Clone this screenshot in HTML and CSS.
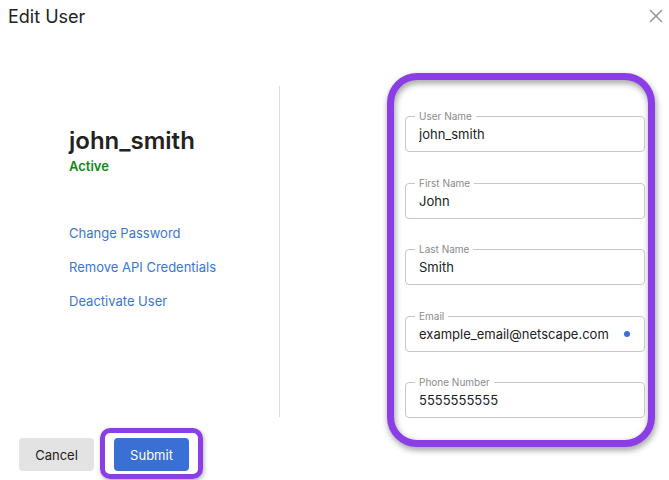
FILE: index.html
```html
<!DOCTYPE html>
<html lang="en">
<head>
    <meta charset="UTF-8">
    <meta name="viewport" content="width=device-width, initial-scale=1.0">
    <title>Edit User</title>
    <link rel="stylesheet" href="styles.css">
</head>
<body>
    <div class="dialog">
        <div class="header">
            <h1>Edit User</h1>
            <button class="close" type="button" aria-label="Close">
                <svg width="14" height="14" viewBox="0 0 14 14">
                    <path d="M1 1 L13 13 M13 1 L1 13" stroke="#9a9a9a" stroke-width="1.6" fill="none"/>
                </svg>
            </button>
        </div>

        <div class="main">
            <div class="left">
                <div class="profile">
                    <h2>john_smith</h2>
                    <div class="status">Active</div>
                    <ul class="actions">
                        <li><a href="#">Change Password</a></li>
                        <li><a href="#">Remove API Credentials</a></li>
                        <li><a href="#">Deactivate User</a></li>
                    </ul>
                </div>
                <div class="footer">
                    <button class="btn btn-cancel" type="button">Cancel</button>
                    <div class="submit-ring">
                        <button class="btn btn-submit" type="button">Submit</button>
                    </div>
                </div>
            </div>

            <div class="divider"></div>

            <div class="right">
                <div class="form-ring">
                    <div class="field">
                        <label>User Name</label>
                        <input type="text" value="john_smith">
                    </div>
                    <div class="field">
                        <label>First Name</label>
                        <input type="text" value="John">
                    </div>
                    <div class="field">
                        <label>Last Name</label>
                        <input type="text" value="Smith">
                    </div>
                    <div class="field">
                        <label>Email</label>
                        <input type="email" value="example_email@netscape.com">
                        <span class="dot"></span>
                    </div>
                    <div class="field">
                        <label>Phone Number</label>
                        <input type="tel" value="5555555555">
                    </div>
                </div>
            </div>
        </div>
    </div>
</body>
</html>
```

FILE: styles.css
```css
body {
    font-family: Inter, "Noto Sans", Arial, sans-serif;
    margin: 0;
    background-color: #fff;
    color: #222;
}

.dialog {
    width: 669px;
    height: 480px;
    overflow: hidden;
}

.header {
    height: 34px;
    display: flex;
    justify-content: space-between;
    align-items: flex-start;
    padding: 0 6px 0 8px;
}

.header h1 {
    margin: 6px 0 0;
    font-size: 18px;
    line-height: 22px;
    font-weight: 400;
    color: #222;
}

.close {
    background: none;
    border: none;
    padding: 0;
    margin-top: 9px;
    cursor: pointer;
}

.main {
    display: flex;
    align-items: flex-start;
    height: 446px;
}

.left {
    width: 279px;
    height: 446px;
    display: flex;
    flex-direction: column;
    justify-content: space-between;
}

.profile {
    padding: 92px 0 0 69px;
}

.profile h2 {
    margin: 0;
    font-size: 24px;
    line-height: 29px;
    font-weight: 600;
    color: #222;
}

.status {
    margin-top: 3px;
    font-size: 13px;
    line-height: 16px;
    font-weight: 600;
    color: #128a12;
}

.actions {
    list-style: none;
    margin: 51px 0 0;
    padding: 0;
}

.actions li {
    height: 34px;
    font-size: 13px;
    line-height: 16px;
}

.actions a {
    color: #3a76d6;
    text-decoration: none;
}

.footer {
    display: flex;
    align-items: flex-start;
    gap: 6px;
    padding: 0 0 1px 19px;
}

.btn {
    font-family: inherit;
    font-size: 13px;
    width: 75px;
    height: 33px;
    border: none;
    border-radius: 4px;
    cursor: pointer;
}

.btn-cancel {
    margin-top: 10px;
    background-color: #e3e3e3;
    color: #222;
}

.btn-submit {
    background-color: #3a70d4;
    color: #fff;
    display: block;
}

.submit-ring {
    border: 5px solid #8b3de6;
    border-radius: 10px;
    padding: 5px 9px 3px 9px;
    box-shadow: 1px 2px 4px rgba(0, 0, 0, 0.3);
}

.divider {
    width: 1px;
    height: 331px;
    margin-top: 52px;
    background-color: #dcdcdc;
}

.right {
    padding: 39px 0 0 107px;
}

.form-ring {
    position: relative;
    width: 268px;
    height: 374px;
    box-sizing: border-box;
    padding: 43px 10px 0 18px;
    display: flex;
    flex-direction: column;
    gap: 30.5px;
}

/* highlight frame drawn over the form */
.form-ring::before {
    content: "";
    position: absolute;
    inset: 0;
    border: 7px solid #8b3de6;
    border-radius: 30px;
    filter: drop-shadow(1px 3px 3px rgba(0, 0, 0, 0.4));
    pointer-events: none;
}

.field {
    position: relative;
    width: 240px;
    height: 36px;
    flex-shrink: 0;
    border: 1px solid #c6c6c6;
    border-radius: 4px;
    box-sizing: border-box;
    background-color: #fff;
}

.field label {
    position: absolute;
    left: 9px;
    top: -7px;
    padding: 0 4px;
    background-color: #fff;
    font-size: 10px;
    line-height: 12px;
    color: #8a8a8a;
}

.field input {
    border: none;
    outline: none;
    background: none;
    width: 100%;
    height: 34px;
    box-sizing: border-box;
    padding: 0 12px 0 13px;
    font-family: inherit;
    font-size: 13px;
    color: #222;
}

.dot {
    position: absolute;
    right: 14px;
    top: 14px;
    width: 6px;
    height: 6px;
    border-radius: 50%;
    background-color: #3a70d4;
}
```
